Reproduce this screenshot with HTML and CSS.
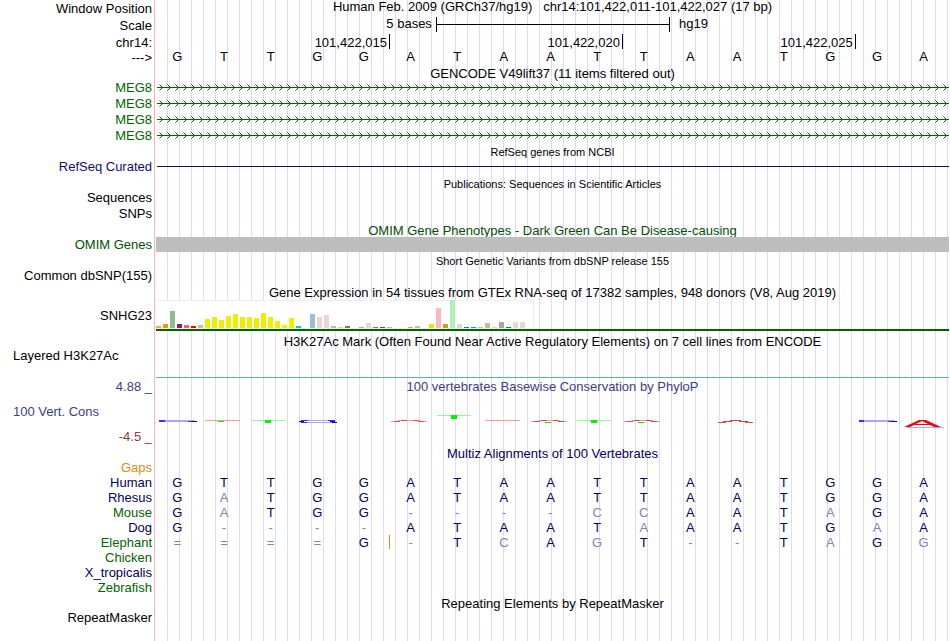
FILE: index.html
```
<!DOCTYPE html>
<html lang="en">
<head>
    <meta charset="UTF-8">
    <meta name="viewport" content="width=device-width, initial-scale=1.0">
    <title>Human chr14:101,422,011-101,422,027 - Genome Browser hg19</title>
    <link rel="stylesheet" href="styles.css">
</head>
<body>
    <main class="browser">
        <!-- Ruler -->
        <div class="row tall">
            <div class="label">Window Position</div>
            <h1 class="data title high">Human Feb. 2009 (GRCh37/hg19) &nbsp; chr14:101,422,011-101,422,027 (17 bp)</h1>
        </div>
        <div class="row tall">
            <div class="label">Scale</div>
            <div class="data scale high">
                <span class="scale-size">5 bases</span>
                <span class="scale-bar"></span>
                <span class="scale-db">hg19</span>
            </div>
        </div>
        <div class="row low">
            <div class="label">chr14:</div>
            <div class="data ticks">
                <span class="tick">101,422,015</span>
                <span class="tick">101,422,020</span>
                <span class="tick">101,422,025</span>
            </div>
        </div>
        <div class="row">
            <div class="label">---&gt;</div>
            <div class="data bases high" data-seq="GTTGGATAATTAATGGA"></div>
        </div>

        <!-- GENCODE -->
        <div class="row short">
            <div class="label"></div>
            <h2 class="data title">GENCODE V49lift37 (11 items filtered out)</h2>
        </div>
        <div class="row">
            <div class="label green">MEG8</div>
            <div class="data gene"></div>
        </div>
        <div class="row">
            <div class="label green">MEG8</div>
            <div class="data gene"></div>
        </div>
        <div class="row">
            <div class="label green">MEG8</div>
            <div class="data gene"></div>
        </div>
        <div class="row">
            <div class="label green">MEG8</div>
            <div class="data gene"></div>
        </div>

        <!-- RefSeq -->
        <div class="row">
            <div class="label"></div>
            <h2 class="data title small">RefSeq genes from NCBI</h2>
        </div>
        <div class="row">
            <div class="label blue high">RefSeq Curated</div>
            <div class="data refseq"></div>
        </div>

        <!-- Publications -->
        <div class="row short">
            <div class="label"></div>
            <h2 class="data title small">Publications: Sequences in Scientific Articles</h2>
        </div>
        <div class="row">
            <div class="label">Sequences</div>
        </div>
        <div class="row">
            <div class="label">SNPs</div>
        </div>

        <!-- OMIM -->
        <div class="row line">
            <div class="label"></div>
            <h2 class="data title omim low">OMIM Gene Phenotypes - Dark Green Can Be Disease-causing</h2>
        </div>
        <div class="row line">
            <div class="label omim">OMIM Genes</div>
            <div class="data omim-bar"></div>
        </div>

        <!-- dbSNP -->
        <div class="row">
            <div class="label"></div>
            <h2 class="data title small low">Short Genetic Variants from dbSNP release 155</h2>
        </div>
        <div class="row">
            <div class="label">Common dbSNP(155)</div>
        </div>

        <!-- GTEx -->
        <div class="row">
            <div class="label"></div>
            <h2 class="data title low">Gene Expression in 54 tissues from GTEx RNA-seq of 17382 samples, 948 donors (V8, Aug 2019)</h2>
        </div>
        <div class="row gtex-row">
            <div class="label">SNHG23</div>
            <div class="data gtex">
                <div class="gtex-chart" id="gtexChart"></div>
            </div>
        </div>

        <!-- H3K27Ac -->
        <div class="row histone-title">
            <div class="label"></div>
            <h2 class="data title">H3K27Ac Mark (Often Found Near Active Regulatory Elements) on 7 cell lines from ENCODE</h2>
        </div>
        <div class="row histone">
            <div class="label left low">Layered H3K27Ac</div>
            <div class="data"></div>
        </div>

        <!-- Conservation -->
        <div class="row tall">
            <div class="label phylo">4.88 _</div>
            <h2 class="data title phylo low">100 vertebrates Basewise Conservation by PhyloP</h2>
        </div>
        <div class="row logo">
            <div class="label left phylo">100 Vert. Cons</div>
            <div class="data">
                <svg viewBox="156 395 793 34" preserveAspectRatio="none" shape-rendering="crispEdges" aria-hidden="true">
                    <g fill="#a8a8ff">
                        <path d="M159 420h35v2h-35z"/>
                        <path d="M859 420h35v2h-35z"/>
                        <path d="M302 420h33v1h-33zM304 422h30v1h-30z"/>
                        <path d="M907 427h37v1h-37z"/>
                    </g>
                    <g fill="#3030ff">
                        <path d="M159 420h6v2h-6zM188 421h5v1h-5z"/>
                        <path d="M859 420h5v2h-5zM888 421h5v1h-5z"/>
                        <path d="M301 420h7v1h-7zM328 420h7v1h-7zM301 422h6v1h-6z"/>
                    </g>
                    <g fill="#0000d8">
                        <path d="M192 421h5v1h-5zM892 421h5v1h-5z"/>
                        <path d="M299 421h5v1h-5zM330 421h5v1h-5zM332 422h5v1h-5z"/>
                    </g>
                    <g fill="#ff9a9a">
                        <path d="M205 420h35v1h-35z"/>
                        <path d="M485 420h35v1h-35z"/>
                        <path d="M391 421h9v1h-9zM418 421h9v1h-9zM398 420h22v1h-22z"/>
                        <path d="M531 421h9v1h-9zM558 421h9v1h-9zM539 420h21v1h-21z"/>
                        <path d="M624 421h9v1h-9zM651 421h9v1h-9zM632 420h21v1h-21z"/>
                    </g>
                    <g fill="#f04040">
                        <path d="M394 421h6v1h-6zM418 421h6v1h-6zM401 420h6v1h-6zM413 420h5v1h-5z"/>
                        <path d="M534 421h6v1h-6zM558 421h6v1h-6zM541 420h6v1h-6zM553 420h5v1h-5z"/>
                        <path d="M627 421h6v1h-6zM651 421h6v1h-6zM634 420h6v1h-6zM646 420h5v1h-5z"/>
                        <path d="M718 422h8v1h-8zM723 421h9v1h-9zM730 420h11v1h-11zM739 421h9v1h-9zM745 422h8v1h-8z"/>
                    </g>
                    <g fill="#90ff90">
                        <path d="M251 420h34v1h-34z"/>
                        <path d="M437 415h34v1h-34z"/>
                        <path d="M577 420h34v1h-34z"/>
                    </g>
                    <g fill="#00f000">
                        <path d="M218 421h6v1h-6z"/>
                        <path d="M265 420h6v3h-6z"/>
                        <path d="M451 415h6v4h-6z"/>
                        <path d="M545 422h6v1h-6z"/>
                        <path d="M591 420h6v3h-6z"/>
                        <path d="M638 422h6v1h-6z"/>
                    </g>
                    <path fill="#ff0000" fill-rule="evenodd" shape-rendering="auto" d="M904 427L919 420H926L941 427H934L930 425H914L910 427ZM916 424H928L922 421Z"/>
                </svg>
            </div>
        </div>
        <div class="row">
            <div class="label phylo-min">-4.5 _</div>
        </div>

        <!-- Multiz -->
        <div class="row line">
            <div class="label"></div>
            <h2 class="data title navy low">Multiz Alignments of 100 Vertebrates</h2>
        </div>
        <div class="row line">
            <div class="label orange">Gaps</div>
        </div>
        <div class="row line">
            <div class="label navy">Human</div>
            <div class="data bases navy" data-seq="GTTGGATAATTAATGGA"></div>
        </div>
        <div class="row line">
            <div class="label navy">Rhesus</div>
            <div class="data bases navy" data-seq="GaTGGATAATTAATGGA"></div>
        </div>
        <div class="row line">
            <div class="label green">Mouse</div>
            <div class="data bases navy" data-seq="GaTGG----ccAATaGA"></div>
        </div>
        <div class="row line">
            <div class="label navy">Dog</div>
            <div class="data bases navy" data-seq="G----ATAATaAATGaA"></div>
        </div>
        <div class="row line">
            <div class="label green">Elephant</div>
            <div class="data bases navy" data-seq="====G-TcAgT--TaGg" data-insert="5"></div>
        </div>
        <div class="row line">
            <div class="label green">Chicken</div>
        </div>
        <div class="row line">
            <div class="label navy">X_tropicalis</div>
        </div>
        <div class="row line">
            <div class="label green">Zebrafish</div>
        </div>

        <!-- RepeatMasker -->
        <div class="row line">
            <div class="label"></div>
            <h2 class="data title low">Repeating Elements by RepeatMasker</h2>
        </div>
        <div class="row line">
            <div class="label">RepeatMasker</div>
        </div>
    </main>

    <script>
        // Lower case letters, gaps and "=" are drawn pale
        document.querySelectorAll('.bases').forEach(function(track) {
            for (const base of track.dataset.seq) {
                const cell = document.createElement('span');
                cell.textContent = base.toUpperCase();
                if (!/[A-Z]/.test(base)) cell.className = 'pale';
                track.appendChild(cell);
            }
            if (track.dataset.insert) {
                const mark = document.createElement('i');
                mark.className = 'insert';
                mark.style.left = (track.dataset.insert / 17 * 100) + '%';
                track.appendChild(mark);
            }
        });

        // [height, color] for each tissue
        const tissues = [
            [2, '#ffa54f'], [4, '#ee9a00'], [17, '#8fbc8f'], [4, '#8b1c62'], [3, '#ee6a50'], [2, '#ff0000'],
            [3, '#cdb79e'], [9, '#eeee00'], [11, '#eeee00'], [8, '#eeee00'], [12, '#eeee00'], [14, '#eeee00'],
            [11, '#eeee00'], [11, '#eeee00'], [10, '#eeee00'], [15, '#eeee00'], [11, '#eeee00'], [7, '#eeee00'],
            [3, '#eeee00'], [10, '#eeee00'], [2, '#00cdcd'], [0, '#ee82ee'], [14, '#9ac0cd'], [11, '#eed5d2'],
            [13, '#eed5d2'], [2, '#cdb79e'], [1, '#eec591'], [2, '#8b7355'], [0, '#8b7355'], [1, '#cdaa7d'],
            [5, '#eed5d2'], [1, '#b452cd'], [1, '#7a378b'], [1, '#cdb79e'], [0, '#cdb79e'], [0, '#cdb79e'],
            [1, '#9acd32'], [2, '#cdb79e'], [0, '#7a67ee'], [4, '#ffd700'], [20, '#ffb6c1'], [4, '#cd9b1d'],
            [28, '#b4eeb4'], [4, '#d9d9d9'], [1, '#3a5fcd'], [1, '#1e90ff'], [1, '#cdb79e'], [5, '#cdb79e'],
            [1, '#ffd39b'], [6, '#a6a6a6'], [1, '#008b45'], [6, '#eed5d2'], [6, '#eed5d2'], [0, '#ff00ff']
        ];
        const chart = document.getElementById('gtexChart');
        tissues.forEach(function(tissue) {
            const bar = document.createElement('span');
            bar.style.height = tissue[0] + 'px';
            bar.style.background = tissue[1];
            chart.appendChild(bar);
        });
    </script>
</body>
</html>
```

FILE: styles.css
```
* {
    margin: 0;
    padding: 0;
    box-sizing: border-box;
}

body {
    font-family: "Liberation Sans", Arial, Helvetica, sans-serif;
    font-size: 13px;
    color: #000;
    background: #fff;
}

/* red line after the labels, guide lines every 12px */
.browser {
    min-height: 100vh;
    padding-right: 1px;
    background:
        linear-gradient(#ffb4b4, #ffb4b4) 154px 0 / 1px 100% no-repeat,
        repeating-linear-gradient(to right, transparent 0, transparent 11px, #dcdcfa 11px, #dcdcfa 12px) 156px 0 / 100% 100% no-repeat;
}

.row {
    display: flex;
    height: 16px;
    line-height: 16px;
}

.row.short {
    height: 14px;
}

.row.line {
    height: 15px;
    line-height: 15px;
}

.row.tall {
    height: 17px;
    line-height: 17px;
}

/* text sits towards the top or the bottom of its row */
.row .high {
    line-height: 14px;
}

.row.low,
.row .low {
    line-height: 18px;
}

.label {
    flex: none;
    width: 156px;
    padding-right: 4px;
    text-align: right;
    white-space: nowrap;
}

.label.left {
    padding-left: 13px;
    text-align: left;
}

.data {
    flex: 1;
    min-width: 0;
}

.title {
    font-size: 13px;
    font-weight: normal;
    text-align: center;
    white-space: nowrap;
}

.title.small {
    font-size: 11px;
}

.green {
    color: #006400;
}

.omim {
    color: #005000;
}

.blue {
    color: #0c0c78;
}

.navy {
    color: #000064;
}

.orange {
    color: #e08c14;
}

.phylo {
    color: #3c3c8c;
}

.phylo-min {
    color: #8c3c3c;
}

/* Ruler */
.scale {
    display: grid;
    grid-template-columns: 6fr 5fr 6fr;
}

.scale-size {
    padding-right: 4px;
    text-align: right;
}

.scale-bar {
    height: 15px;
    margin-right: -1px;
    border: solid #000;
    border-width: 0 1px;
    background: linear-gradient(#000, #000) 0 7px / 100% 1px no-repeat;
}

.scale-db {
    padding-left: 10px;
}

.ticks {
    display: grid;
    grid-template-columns: repeat(3, 5fr) 2fr;
    padding-left: 1px;
}

.tick {
    height: 15px;
    padding-right: 2px;
    border-right: 1px solid #000;
    text-align: right;
}

.bases {
    position: relative;
    display: grid;
    grid-template-columns: repeat(17, 1fr);
    margin: 0 2px 0 -2px;
    text-align: center;
}

.pale {
    color: #8282b4;
}

.insert {
    position: absolute;
    top: 0;
    width: 1px;
    height: 14px;
    margin-left: 2px;
    background: #e08c14;
}

/* Gene tracks */
.gene {
    margin-left: 1px;
    background:
        url("data:image/svg+xml,%3Csvg xmlns='http://www.w3.org/2000/svg' width='8' height='7'%3E%3Cpath d='M2.5 .5l3 3-3 3' fill='none' stroke='%23006400'/%3E%3C/svg%3E") 0 4px / 8px 7px repeat-x,
        linear-gradient(#006400, #006400) 0 7px / 100% 1px no-repeat;
}

.refseq {
    margin-left: 1px;
    background: linear-gradient(#0c0c78, #0c0c78) 0 6px / 100% 1px no-repeat;
}

.omim-bar {
    background: #bebebe;
}

.gtex-row {
    height: 31px;
    line-height: 32px;
}

.gtex {
    border-bottom: 2px solid #006400;
}

.gtex-chart {
    display: flex;
    align-items: flex-end;
    gap: 2px;
    width: 378px;
    height: 29px;
    background: #fff;
    border: solid #eee;
    border-width: 1px 1px 1px 0;
}

.gtex-chart span {
    flex: none;
    width: 5px;
}

.histone-title {
    line-height: 22px;
}

.histone {
    height: 31px;
}

.histone .data {
    border-bottom: 1px solid #50b4c8;
}

.logo {
    height: 34px;
    line-height: 34px;
}

.logo svg {
    display: block;
    width: 100%;
    height: 34px;
}
```
